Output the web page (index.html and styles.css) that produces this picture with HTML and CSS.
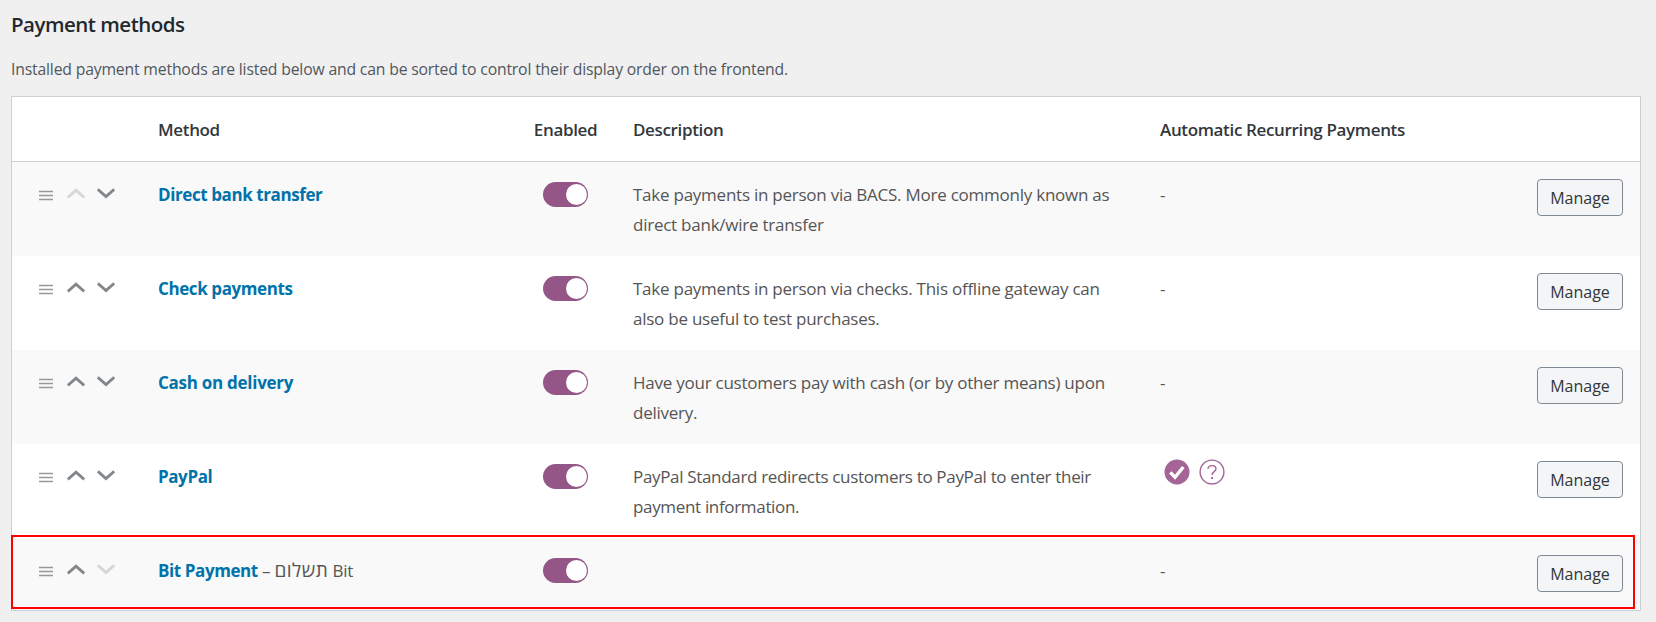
FILE: index.html
```
<!DOCTYPE html>
<html lang="en">
<head>
<meta charset="utf-8">
<title>Payment methods</title>
<link rel="stylesheet" href="styles.css">
</head>
<body>
<svg class="defs" width="0" height="0">
  <symbol id="drag" viewBox="0 0 14 11"><path d="M0 1.500h14M0 5.500h14M0 9.500h14" fill="none" stroke="#999" stroke-width="1.700"/></symbol>
  <symbol id="up" viewBox="0 0 18 11"><path d="M.8 9.500 9 2.200l8.200 7.300" fill="none" stroke="currentColor" stroke-width="2.900"/></symbol>
  <symbol id="down" viewBox="0 0 18 11"><path d="M.8 1.300 9 8.600l8.200-7.300" fill="none" stroke="currentColor" stroke-width="2.900"/></symbol>
</svg>
<main class="page">
  <h2 class="title">Payment methods</h2>
  <p class="intro">Installed payment methods are listed below and can be sorted to control their display order on the frontend.</p>
  <section class="gateways">
    <div class="row head">
      <div></div><div>Method</div><div class="enabled">Enabled</div><div>Description</div><div>Automatic Recurring Payments</div><div></div>
    </div>
    <div class="row odd">
      <div class="sort"><svg class="drag"><use href="#drag"/></svg><svg class="arrow off"><use href="#up"/></svg><svg class="arrow dn"><use href="#down"/></svg></div>
      <div><a class="name">Direct bank transfer</a></div>
      <div class="enabled"><span class="toggle"></span></div>
      <div class="desc">Take payments in person via BACS. More commonly known as<br>direct bank/wire transfer</div>
      <div>-</div>
      <div class="action"><button class="button">Manage</button></div>
    </div>
    <div class="row">
      <div class="sort"><svg class="drag"><use href="#drag"/></svg><svg class="arrow"><use href="#up"/></svg><svg class="arrow dn"><use href="#down"/></svg></div>
      <div><a class="name">Check payments</a></div>
      <div class="enabled"><span class="toggle"></span></div>
      <div class="desc">Take payments in person via checks. This offline gateway can<br>also be useful to test purchases.</div>
      <div>-</div>
      <div class="action"><button class="button">Manage</button></div>
    </div>
    <div class="row odd">
      <div class="sort"><svg class="drag"><use href="#drag"/></svg><svg class="arrow"><use href="#up"/></svg><svg class="arrow dn"><use href="#down"/></svg></div>
      <div><a class="name wide">Cash on delivery</a></div>
      <div class="enabled"><span class="toggle"></span></div>
      <div class="desc">Have your customers pay with cash (or by other means) upon<br>delivery.</div>
      <div>-</div>
      <div class="action"><button class="button">Manage</button></div>
    </div>
    <div class="row">
      <div class="sort"><svg class="drag"><use href="#drag"/></svg><svg class="arrow"><use href="#up"/></svg><svg class="arrow dn"><use href="#down"/></svg></div>
      <div><a class="name">PayPal</a></div>
      <div class="enabled"><span class="toggle"></span></div>
      <div class="desc tight">PayPal Standard redirects customers to PayPal to enter their<br>payment information.</div>
      <div class="status">
        <svg width="26" height="26" viewBox="0 0 26 26"><circle cx="13" cy="13" r="12.5" fill="#a46497"/><path d="M6.3 13.4 11 18.2 19.3 8" fill="none" stroke="#fff" stroke-width="3.4"/></svg>
        <svg width="26" height="26" viewBox="0 0 26 26" fill="none" stroke="#a46497"><circle cx="13" cy="13" r="11.9" stroke-width="1.4"/><path d="M9 10c0-2.3 1.600-3.400 4-3.400s4 1.200 4 3.200c0 3-3.900 2.700-3.900 6.200" stroke-width="1.400"/><path d="M13.100 18v2" stroke-width="1.900"/></svg>
      </div>
      <div class="action"><button class="button">Manage</button></div>
    </div>
    <div class="row odd last">
      <div class="sort"><svg class="drag"><use href="#drag"/></svg><svg class="arrow"><use href="#up"/></svg><svg class="arrow dn off"><use href="#down"/></svg></div>
      <div><a class="name">Bit Payment</a> – <span class="hebrew">תשלום</span> Bit</div>
      <div class="enabled"><span class="toggle"></span></div>
      <div></div>
      <div>-</div>
      <div class="action"><button class="button">Manage</button></div>
      <div class="highlight"></div>
    </div>
  </section>
</main>
</body>
</html>
```
FILE: styles.css
```
* { box-sizing: border-box; }
body {
  margin: 0;
  background: #f0f0f1;
  color: #555;
  font-family: "Open Sans", "Noto Sans", sans-serif;
}
.defs { display: block; }
.page { padding: 10px 15px 0 11px; }
.title {
  margin: 0;
  height: 44px;
  line-height: 29px;
  font-size: 20.5px;
  font-weight: 600;
  letter-spacing: -0.5px;
  color: #23282d;
}
.intro {
  margin: 0;
  height: 42px;
  line-height: 30px;
  font-size: 15.75px;
  letter-spacing: -0.175px;
  color: #50575e;
}
.gateways {
  border: 1px solid #ccd0d4;
  background: #fff;
  font-size: 17px;
  line-height: 30px;
  letter-spacing: -0.245px;
}
.row {
  display: grid;
  grid-template-columns: 146px 368px 107px 527px 1fr auto;
  height: 94px;
  padding: 18px 17px 0 0;
}
.head {
  height: 65px;
  border-bottom: 1px solid #ccd0d4;
  font-weight: 600;
  letter-spacing: -0.35px;
  color: #32373c;
}
.odd { background: #f9f9f9; }
.last { height: 72px; position: relative; }
.sort { display: flex; padding: 8px 0 0 27px; }
.drag { width: 14px; height: 11px; margin-top: 2px; }
.arrow { width: 18px; height: 11px; margin-left: 14px; color: #82878c; }
.dn { margin-left: 12px; }
.off { color: #d5d6d8; }
.name { font-weight: 700; color: #0073aa; letter-spacing: -0.41px; }
.wide { letter-spacing: -0.27px; }
.tight { letter-spacing: -0.33px; }
.enabled { width: 79px; text-align: center; }
.toggle {
  display: block;
  width: 45px;
  height: 25px;
  margin: 2px auto 0;
  padding: 2px 1.5px;
  border-radius: 13px;
  background: #935687;
}
.toggle::before {
  content: "";
  display: block;
  width: 21px;
  height: 21px;
  margin-left: auto;
  border-radius: 50%;
  background: #fff;
}
.hebrew { font-size: 19px; letter-spacing: 0.5px; line-height: 1; }
.status { display: flex; align-items: flex-start; gap: 8.5px; margin-top: -3px; padding-left: 4px; }
.action { margin-top: -1px; }
.button {
  display: block;
  width: 86px;
  height: 37px;
  padding: 1px 0 0;
  border: 1px solid #7e8993;
  border-radius: 4px;
  background: #f3f5f6;
  color: #32373c;
  font: 16px/35px "Open Sans", sans-serif;
}
.highlight {
  position: absolute;
  left: -1px;
  top: -3px;
  width: 1624px;
  height: 74px;
  border: 2px solid #f00;
}
```
